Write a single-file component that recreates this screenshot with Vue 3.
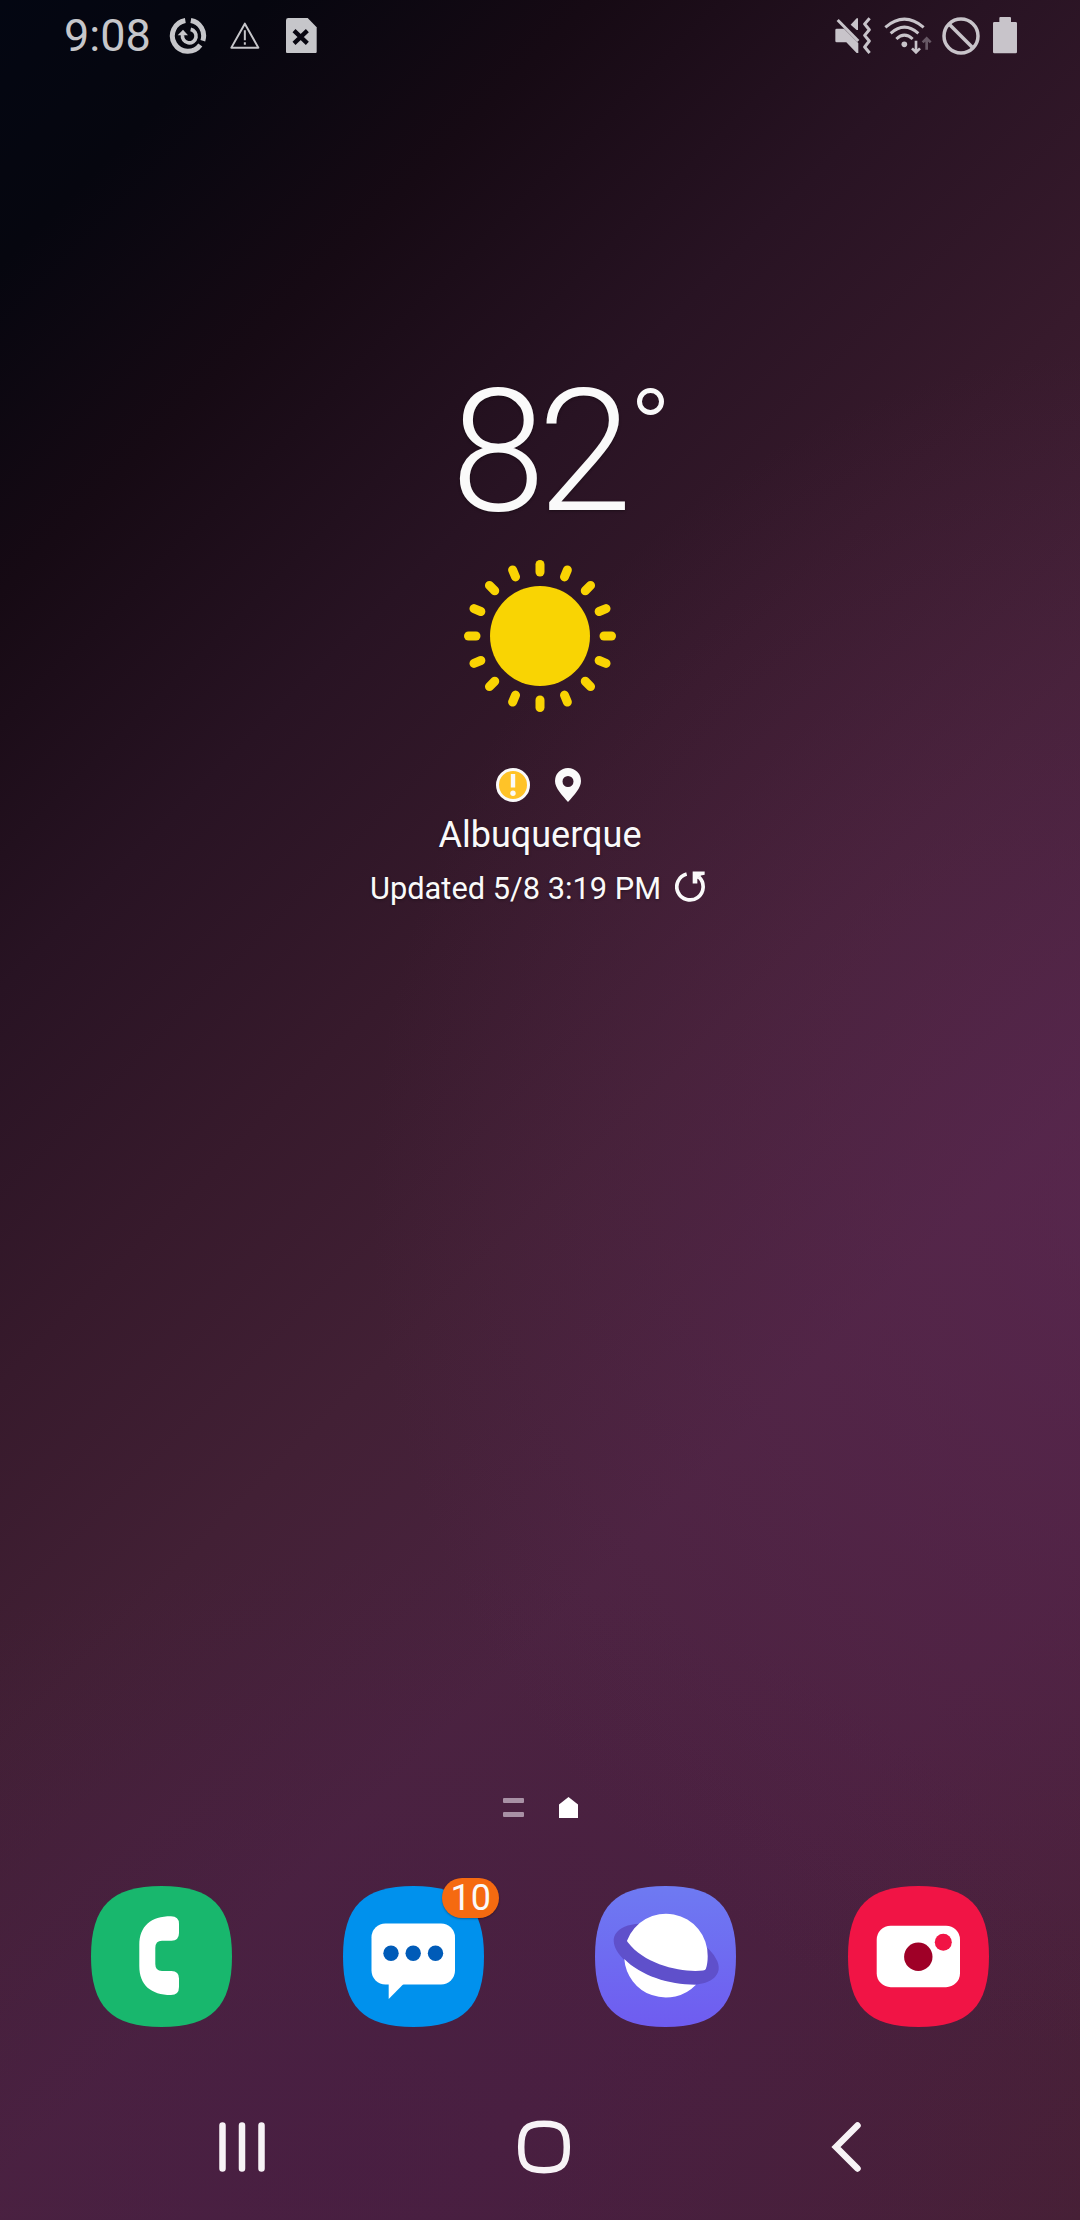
<script setup>
const rays = Array.from({ length: 16 }, (_, i) => i * 22.5)
const squircle = 'M70.5 0C120.5 0 141 20.5 141 70.5S120.5 141 70.5 141 0 120.5 0 70.5 20.5 0 70.5 0Z'
</script>

<template>
  <main class="screen">
    <header class="status">
      <div class="left">
        <span class="clock">9:08</span>
        <svg class="s-sync" viewBox="355 50 114 114" fill="none" stroke="currentColor">
          <path d="M420.500 60.500A46.500 46.500 0 0 1 456.500 121M449 134A46.500 46.500 0 1 1 404 60.500" stroke-width="15" />
          <path d="M420 87A20.500 20.500 0 1 1 395.500 104" stroke-width="11" />
          <path d="M381 105L397 88L412 105Z" fill="currentColor" stroke="none" />
        </svg>
        <svg class="s-warn" viewBox="540 66 89 82" fill="none" stroke="currentColor">
          <path d="M584.500 71L625 143H544Z" stroke-width="6" stroke-linejoin="round" />
          <path d="M584.500 91V121M584.500 127V134" stroke-width="6" />
        </svg>
        <svg class="s-sim" viewBox="708 52 92 107">
          <path d="M715 52H773L800 80V152Q800 159 793 159H715Q708 159 708 152V59Q708 52 715 52Z" fill="currentColor" />
          <path d="M732 90L772 128M772 90L732 128" stroke="#080611" stroke-width="13" />
        </svg>
      </div>
      <div class="right">
        <svg class="s-mute" viewBox="71 49 109 111" fill="none" stroke="currentColor">
          <path d="M76 84H98L141 127V157H136L105 125H76Q72 125 72 121V88Q72 84 76 84Z" fill="currentColor" stroke="none" />
          <path d="M118 72L136 53H140V88H136Z" fill="currentColor" stroke="none" />
          <path d="M79 58L141 121" stroke-width="9" />
          <path d="M175 53L160 70L174 87L160 104L174 121L160 139L175 157" stroke-width="9" stroke-linejoin="round" />
        </svg>
        <svg class="s-wifi" viewBox="219 49 144 111" fill="none" stroke="currentColor">
          <path d="M223 80Q280 31 338 80M239 98Q280 61 322 98M256 115Q280 92 305 115" stroke-width="9" />
          <circle cx="280" cy="131" r="8.500" fill="currentColor" stroke="none" />
          <path d="M315 120V153M303 143L315 155L327 143" stroke-width="8" />
          <path d="M347 147V114M335 125L347 113L359 125" stroke-width="8" opacity=".4" />
        </svg>
        <svg class="s-block" viewBox="393 48 114 114" fill="none" stroke="currentColor" stroke-width="10.500">
          <circle cx="450" cy="105" r="51" />
          <path d="M414 69L486 141" />
        </svg>
        <svg class="s-batt" viewBox="546 50 72 109">
          <path d="M568 50H597Q600 50 600 53V65H614Q618 65 618 69V155Q618 159 614 159H550Q546 159 546 155V69Q546 65 550 65H565V53Q565 50 568 50Z" fill="currentColor" />
        </svg>
      </div>
    </header>

    <section class="weather">
      <div class="temp">
        <span class="deg">82</span>
        <i class="ring"></i>
      </div>
      <svg class="sun" viewBox="-80 -80 160 160">
        <circle r="50" fill="#f9d403" />
        <rect v-for="a in rays" :key="a" x="-4.500" y="-76" width="9" height="16.500" rx="4.500" fill="#f9d403" :transform="`rotate(${a})`" />
      </svg>
      <div class="marks">
        <svg width="34" height="34" viewBox="0 0 34 34">
          <circle cx="17" cy="17" r="15.500" fill="#ffc328" stroke="#fafafa" stroke-width="3" />
          <path d="M14.800 6H19.200V19.500H14.800Z" fill="#fafafa" />
          <circle cx="17" cy="25.300" r="2.700" fill="#fafafa" />
        </svg>
        <svg width="26" height="34" viewBox="0 0 26 34">
          <path fill-rule="evenodd" fill="#fafafa" d="M13 0A13 13 0 0 1 26 13C26 20 19 27 13 34C7 27 0 20 0 13A13 13 0 0 1 13 0ZM13 8A5.500 5.500 0 1 0 13 19A5.500 5.500 0 1 0 13 8Z" />
        </svg>
      </div>
      <div class="city">Albuquerque</div>
      <div class="updated">
        <span>Updated 5/8 3:19 PM</span>
        <svg width="30" height="31" viewBox="976 362 90 92">
          <path d="M1011 370.500A39.500 39.500 0 1 0 1048 380" fill="none" stroke="#fafafa" stroke-width="11" />
          <path d="M1029 363H1065V373L1054 375L1043 386V399H1029Z" fill="#fafafa" />
        </svg>
      </div>
    </section>

    <div class="pages">
      <span class="feed"><i></i><i></i></span>
      <svg width="19" height="21" viewBox="0 0 19 21"><path d="M9.500 0L19 7.500V21H0V7.500Z" fill="#fff" /></svg>
    </div>

    <section class="dock">
      <div class="app">
        <svg viewBox="0 0 141 141">
          <path :d="squircle" fill="#18b76d" />
          <path fill="#fff" d="M88 38V47Q88 54.700 80.500 54.700H71Q64.300 54.700 64.300 62V78Q64.300 85 71 85H80.500Q88 85 88 92.500V101Q88 109 80 109C60 109 48.300 99 48.300 80V59C48.300 40 60 30.300 80 30.300Q88 30.300 88 38Z" />
        </svg>
      </div>
      <div class="app">
        <svg viewBox="0 0 141 141">
          <path :d="squircle" fill="#0091ed" />
          <rect x="28.500" y="37.500" width="83.500" height="61" rx="14" fill="#fff" />
          <path d="M45.700 97V113L60.500 98V97Z" fill="#fff" />
          <circle cx="48" cy="67.200" r="7.700" fill="#005bb8" />
          <circle cx="70.200" cy="67.200" r="7.700" fill="#005bb8" />
          <circle cx="92.500" cy="67.200" r="7.700" fill="#005bb8" />
        </svg>
        <span class="badge">10</span>
      </div>
      <div class="app">
        <svg viewBox="0 0 141 141">
          <defs>
            <linearGradient id="violet" x1="0" y1="0" x2="0" y2="1">
              <stop offset="0" stop-color="#6e7af2" />
              <stop offset="1" stop-color="#6f5cf0" />
            </linearGradient>
          </defs>
          <path :d="squircle" fill="url(#violet)" />
          <ellipse cx="71.200" cy="68.200" rx="54.800" ry="26.300" transform="rotate(19 71.200 68.200)" fill="#5f50cb" />
          <path fill="#fff" d="M32 54.700A41.700 41.700 0 0 1 112.700 70Q112.700 78 110.800 83Q110.300 84.300 108 84.500C88 87 50 79 33 56.500Q32 55.500 32 54.700Z" />
          <path fill="#fff" d="M29.300 73A41.700 41.700 0 0 0 101 98.700C75 99 46 90 29.300 73Z" />
        </svg>
      </div>
      <div class="app">
        <svg viewBox="0 0 141 141">
          <path :d="squircle" fill="#f11445" />
          <rect x="28.700" y="39.700" width="83.300" height="61.500" rx="14" fill="#fff" />
          <circle cx="70.300" cy="70.700" r="14.200" fill="#9f0027" />
          <circle cx="95.300" cy="56.200" r="8.500" fill="#f11445" />
        </svg>
      </div>
    </section>

    <nav class="nav">
      <svg width="48" height="54" viewBox="0 0 48 54"><path d="M4.500 5.500V48.500M24 5.500V48.500M43.500 5.500V48.500" stroke="#f7f3f6" stroke-width="6.500" stroke-linecap="round" /></svg>
      <svg width="54" height="54" viewBox="0 0 54 54"><path d="M27 3.800C45 3.800 49.800 9 49.800 27S45 50.200 27 50.200 4.200 45 4.200 27 9 3.800 27 3.800Z" fill="none" stroke="#f7f3f6" stroke-width="6.500" /></svg>
      <svg width="32" height="54" viewBox="0 0 32 54"><path d="M27.500 5.500L6 27L27.500 48.500" fill="none" stroke="#f7f3f6" stroke-width="6.500" stroke-linecap="round" /></svg>
    </nav>
  </main>
</template>

<style>
body { margin: 0; background: #000; }
</style>

<style scoped>
.screen {
  width: 1080px;
  height: 2220px;
  overflow: hidden;
  display: flex;
  flex-direction: column;
  font-family: Roboto, "Noto Sans", sans-serif;
  color: #fafafa;
  background:
    radial-gradient(ellipse 750px 850px at 1120px 1200px, rgba(98, 42, 88, .52), rgba(98, 42, 88, 0)),
    radial-gradient(ellipse 800px 600px at 350px 2150px, rgba(70, 28, 68, .5), rgba(70, 28, 68, 0)),
    linear-gradient(135deg, #030612 0%, #06060f 8%, #160a14 18%, #281323 30%, #371a2c 42%, #422035 53%, #4b2340 66%, #4b213f 80%, #472036 100%);
}
svg { display: block; flex: none; }
.status {
  height: 71px;
  flex: none;
  display: flex;
  justify-content: space-between;
  align-items: center;
  padding: 0 63px 0 64px;
  color: #c8c4ca;
}
.left, .right { display: flex; align-items: center; }
.clock { font-size: 45px; line-height: 71px; width: 104.500px; color: #c6c6ca; }
.left { color: #c6c6ca; }
.s-sync { width: 38px; height: 38px; }
.s-warn { width: 29.700px; height: 27.300px; margin-left: 23.500px; }
.s-sim { width: 30.700px; height: 35.700px; margin-left: 26.300px; }
.s-mute { width: 36.300px; height: 37px; }
.s-wifi { width: 48px; height: 37px; margin-left: 13px; }
.s-block { width: 38px; height: 38px; margin-left: 10px; }
.s-batt { width: 24px; height: 36.300px; margin-left: 13px; }

.weather {
  height: 1726px;
  flex: none;
  box-sizing: border-box;
  padding-top: 300px;
  display: flex;
  flex-direction: column;
  align-items: center;
  text-shadow: 0 1px 3px rgba(0, 0, 0, .35);
}
.temp { display: flex; align-items: flex-start; width: 212px; height: 185px; }
.deg { font-size: 170px; font-weight: 300; line-height: 162px; letter-spacing: -7.500px; width: 185px; margin-left: 17px; flex: none; }
.ring { width: 17px; height: 17px; border: 5.700px solid #fafafa; border-radius: 50%; margin: 17px 0 0 1px; flex: none; }
.sun { width: 160px; height: 160px; }
.marks { display: flex; gap: 25px; margin: 52px 4px 0 0; }
.city { font-size: 36px; line-height: 42px; margin-top: 12px; }
.updated { display: flex; align-items: center; gap: 14px; font-size: 30.800px; line-height: 38px; margin: 14px 5px 0 0; }
.updated svg { position: relative; top: -3px; }

.pages { height: 21px; flex: none; display: flex; justify-content: center; gap: 35px; }
.feed { display: flex; flex-direction: column; gap: 9px; padding-top: 1px; }
.feed i { width: 21px; height: 5px; border-radius: 1px; background: #a891a5; }

.dock { display: grid; grid-template-columns: repeat(4, 252.200px); padding: 68px 35px 0 35.400px; justify-items: center; height: 141px; flex: none; }
.app { position: relative; width: 141px; height: 141px; }
.badge {
  position: absolute;
  left: 99px;
  top: -8px;
  width: 57px;
  height: 40px;
  border-radius: 20px;
  background: #f56a10;
  font-size: 36px;
  line-height: 40px;
  text-align: center;
  box-shadow: 0 1px 2px rgba(0, 0, 0, .3);
}
.nav { display: grid; grid-template-columns: repeat(3, 302px); padding: 93px 89px 0 90.500px; justify-items: center; }
</style>
